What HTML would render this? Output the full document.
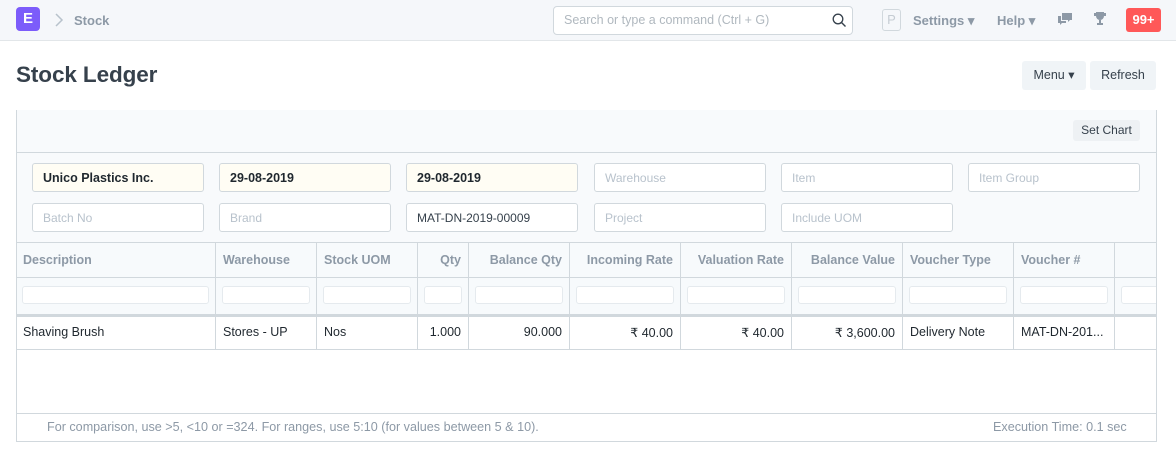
<!DOCTYPE html>
<html><head><style>
*{box-sizing:border-box;margin:0;padding:0}
body{width:1176px;height:456px;overflow:hidden;background:#fff;font-family:"Liberation Sans",sans-serif;color:#1f272e;position:relative}
.abs{position:absolute}
.nav{left:0;top:0;width:1176px;height:41px;background:#f5f7fa;border-bottom:1px solid #e2e6e9}
.logo{left:16px;top:7px;width:24px;height:24px;background:#7c5cfa;border-radius:4px;color:#fff;font-weight:bold;font-size:15px;text-align:center;line-height:24px}
.crumb{font-size:13px;font-weight:bold;color:#8d99a6}
.search{left:553px;top:6px;width:300px;height:29px;border:1px solid #d1d8dd;border-radius:4px;background:#fff;font-size:12.5px;color:#b0b8bf;padding:6px 10px}
.navt{font-size:13px;font-weight:bold;color:#8d99a6}
.badge{left:1126px;top:8px;width:35px;height:24px;background:#ff5858;border-radius:3px;color:#fff;font-weight:bold;font-size:13px;text-align:center;line-height:24px}
h1{position:absolute;left:16px;top:62px;font-size:22.5px;font-weight:bold;color:#36414c;letter-spacing:-.1px}
.btn{background:#f0f4f7;border-radius:3px;font-size:12.5px;color:#36414c;text-align:center;line-height:29px;height:29px}
.box{left:16px;top:110px;width:1141px;height:332px;border:1px solid #d1d8dd;border-top:none;overflow:hidden}
.fil{height:29px;border:1px solid #d1d8dd;border-radius:3px;background:#fff;font-size:12px;color:#b8c2cc;padding:7px 10px;width:172px}
.fil.y{background:#fffdf4;color:#1f272e;font-weight:bold;font-size:12.5px}
.fil.v{color:#36414c}
.th{top:243px;height:35px;border-right:1px solid #d1d8dd;border-bottom:1px solid #d1d8dd;background:#f7fafc;font-size:12.5px;font-weight:bold;color:#8d99a6;padding:10px 7px}
.tf{top:278px;height:36px;border-right:1px solid #d1d8dd;background:#f7fafc;padding:8px 6px}
.tf div{height:18px;background:#fff;border:1px solid #e5eaee;border-radius:3px}
.td{top:317px;height:33px;border-right:1px solid #d1d8dd;border-bottom:1px solid #d1d8dd;font-size:12.5px;color:#1f272e;padding:8px 7px;white-space:nowrap}
.r{text-align:right}
</style></head><body>
<div class="abs nav"></div>
<div class="abs logo">E</div>
<svg class="abs" style="left:54px;top:13px" width="10" height="14"><path d="M2 1l6 6-6 6" stroke="#b8c2cc" stroke-width="1.5" fill="none"/></svg>
<div class="abs crumb" style="left:74px;top:13px">Stock</div>
<div class="abs search">Search or type a command (Ctrl + G)</div>
<svg class="abs" style="left:832px;top:13px" width="15" height="15"><circle cx="6" cy="6" r="4.8" stroke="#36414c" stroke-width="1.3" fill="none"/><path d="M9.5 9.5l4 4" stroke="#36414c" stroke-width="1.4"/></svg>
<div class="abs" style="left:882px;top:9px;width:19px;height:22px;border:1px solid #d1d8dd;border-radius:3px;color:#c5ccd3;font-size:13px;text-align:center;line-height:20px">P</div>
<div class="abs navt" style="left:913px;top:13px">Settings ▾</div>
<div class="abs navt" style="left:997px;top:13px">Help ▾</div>
<svg class="abs" style="left:1057px;top:12px" width="16" height="14"><path d="M5 1h10v7h-2l-2 2v-2H5z M1 4h3v5h5v2H5l-2 2v-2H1z" fill="#8d99a6"/></svg>
<svg class="abs" style="left:1093px;top:11px" width="14" height="15"><path d="M3 1h8v4a4 4 0 0 1-8 0z M1 2h2v3H1z M11 2h2v3h-2z M6 9h2v3H6z M4 12h6v2H4z" fill="#8d99a6"/></svg>
<div class="abs badge">99+</div>
<h1>Stock Ledger</h1>
<div class="abs btn" style="left:1022px;top:61px;width:64px">Menu ▾</div>
<div class="abs btn" style="left:1090px;top:61px;width:66px">Refresh</div>
<div class="abs box"></div>
<div class="abs" style="left:17px;top:110px;width:1139px;height:133px;background:#f8fafc;border-bottom:1px solid #d1d8dd"></div>
<div class="abs" style="left:17px;top:152px;width:1139px;height:1px;background:#d1d8dd"></div>
<div class="abs btn" style="left:1073px;top:120px;width:67px;height:21px;line-height:21px;font-size:12px;background:#eef1f4">Set Chart</div>
<div class="abs fil y" style="left:32px;top:163px">Unico Plastics Inc.</div>
<div class="abs fil y" style="left:219px;top:163px">29-08-2019</div>
<div class="abs fil y" style="left:406px;top:163px">29-08-2019</div>
<div class="abs fil" style="left:594px;top:163px">Warehouse</div>
<div class="abs fil" style="left:781px;top:163px">Item</div>
<div class="abs fil" style="left:968px;top:163px">Item Group</div>
<div class="abs fil" style="left:32px;top:203px">Batch No</div>
<div class="abs fil" style="left:219px;top:203px">Brand</div>
<div class="abs fil v" style="left:406px;top:203px">MAT-DN-2019-00009</div>
<div class="abs fil" style="left:594px;top:203px">Project</div>
<div class="abs fil" style="left:781px;top:203px">Include UOM</div>
<div class="abs" style="left:17px;top:243px;width:1139px;height:171px;overflow:hidden">
<div style="position:relative;left:-17px;top:-243px">
<div class="abs th" style="left:16px;width:200px">Description</div>
<div class="abs th" style="left:216px;width:101px">Warehouse</div>
<div class="abs th" style="left:317px;width:101px">Stock UOM</div>
<div class="abs th r" style="left:418px;width:51px">Qty</div>
<div class="abs th r" style="left:469px;width:101px">Balance Qty</div>
<div class="abs th r" style="left:570px;width:111px">Incoming Rate</div>
<div class="abs th r" style="left:681px;width:111px">Valuation Rate</div>
<div class="abs th r" style="left:792px;width:111px">Balance Value</div>
<div class="abs th" style="left:903px;width:111px">Voucher Type</div>
<div class="abs th" style="left:1014px;width:101px">Voucher #</div>
<div class="abs th" style="left:1115px;width:101px"></div>
<div class="abs tf" style="left:16px;width:200px"><div></div></div>
<div class="abs tf" style="left:216px;width:101px"><div></div></div>
<div class="abs tf" style="left:317px;width:101px"><div></div></div>
<div class="abs tf" style="left:418px;width:51px"><div></div></div>
<div class="abs tf" style="left:469px;width:101px"><div></div></div>
<div class="abs tf" style="left:570px;width:111px"><div></div></div>
<div class="abs tf" style="left:681px;width:111px"><div></div></div>
<div class="abs tf" style="left:792px;width:111px"><div></div></div>
<div class="abs tf" style="left:903px;width:111px"><div></div></div>
<div class="abs tf" style="left:1014px;width:101px"><div></div></div>
<div class="abs tf" style="left:1115px;width:101px"><div></div></div>
<div class="abs" style="left:16px;top:314px;width:1200px;height:3px;background:#d1d8dd"></div>
<div class="abs td" style="left:16px;width:200px">Shaving Brush</div>
<div class="abs td" style="left:216px;width:101px">Stores - UP</div>
<div class="abs td" style="left:317px;width:101px">Nos</div>
<div class="abs td r" style="left:418px;width:51px">1.000</div>
<div class="abs td r" style="left:469px;width:101px">90.000</div>
<div class="abs td r" style="left:570px;width:111px">₹ 40.00</div>
<div class="abs td r" style="left:681px;width:111px">₹ 40.00</div>
<div class="abs td r" style="left:792px;width:111px">₹ 3,600.00</div>
<div class="abs td" style="left:903px;width:111px">Delivery Note</div>
<div class="abs td" style="left:1014px;width:101px">MAT-DN-201...</div>
<div class="abs td" style="left:1115px;width:101px"></div>
</div></div>
<div class="abs" style="left:17px;top:413px;width:1139px;height:1px;background:#d1d8dd"></div>
<div class="abs" style="left:47px;top:420px;font-size:12.6px;color:#8d99a6">For comparison, use &gt;5, &lt;10 or =324. For ranges, use 5:10 (for values between 5 &amp; 10).</div>
<div class="abs" style="left:993px;top:420px;font-size:12.6px;color:#8d99a6">Execution Time: 0.1 sec</div>
</body></html>
